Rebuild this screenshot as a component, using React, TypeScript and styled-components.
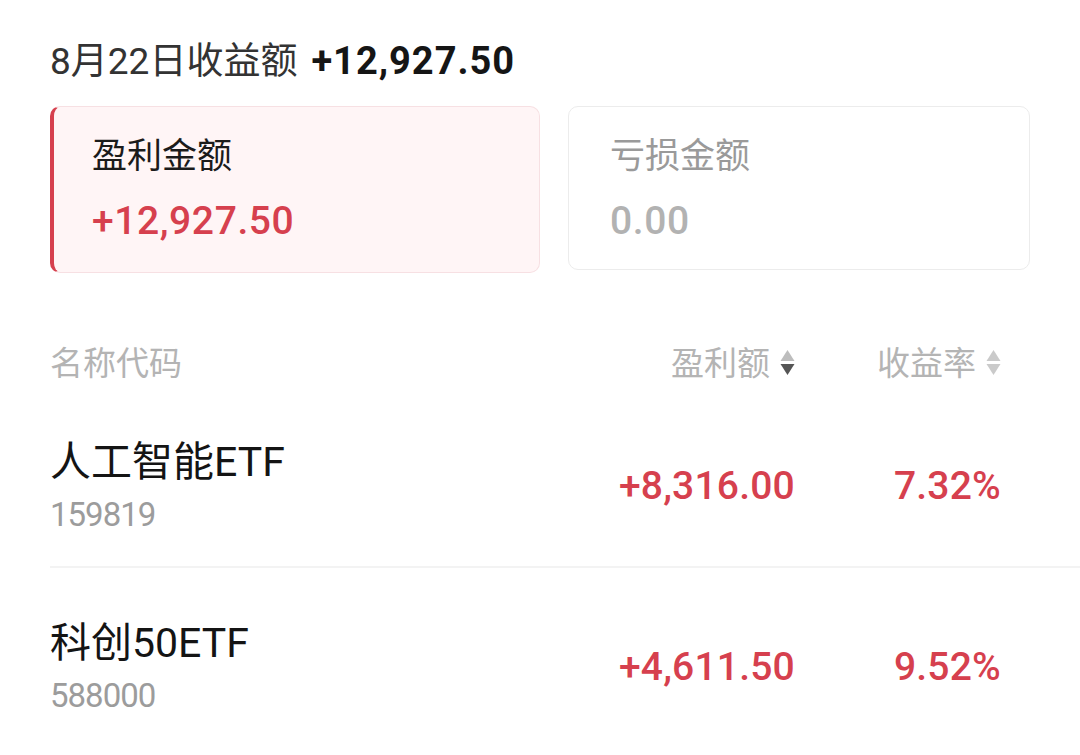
import React from "react";
import styled, { createGlobalStyle } from "styled-components";

const Global = createGlobalStyle`
  html, body { margin: 0; padding: 0; background: #ffffff; }
  body { font-family: Roboto, "Noto Sans CJK SC", sans-serif; -webkit-font-smoothing: antialiased; }
`;

const RED = "#d6404e";

const Page = styled.div`
  width: 1080px;
  height: 755px;
  overflow: hidden;
  padding-left: 50px;
  box-sizing: border-box;
`;

const Title = styled.div`
  margin-top: 39px;
  height: 44px;
  line-height: 44px;
  font-size: 37px;
  color: #333333;
  white-space: nowrap;
`;

const TitleAmount = styled.span`
  font-weight: 700;
  font-size: 38px;
  color: #151515;
  margin-left: 14px;
  letter-spacing: 1px;
`;

const Cards = styled.div`
  display: flex;
  align-items: flex-start;
  gap: 28px;
  margin-top: 23px;
`;

const Card = styled.div<{ $active?: boolean; $w: number; $h: number }>`
  width: ${(p) => p.$w}px;
  height: ${(p) => p.$h}px;
  box-sizing: border-box;
  border-radius: 10px;
  border: 1px solid ${(p) => (p.$active ? "#f7e0e3" : "#ececec")};
  border-left: ${(p) => (p.$active ? `4px solid ${RED}` : "1px solid #ececec")};
  background: ${(p) => (p.$active ? "#fff5f6" : "#ffffff")};
  padding: 28px 0 0 ${(p) => (p.$active ? 38 : 41)}px;
  display: flex;
  flex-direction: column;
  gap: 20px;
`;

const CardLabel = styled.div<{ $muted?: boolean }>`
  font-size: 35px;
  line-height: 44px;
  color: ${(p) => (p.$muted ? "#9a9a9a" : "#1b1b1b")};
`;

const CardValue = styled.div<{ $muted?: boolean }>`
  font-size: 39px;
  line-height: 44px;
  font-weight: 500;
  letter-spacing: 0.6px;
  color: ${(p) => (p.$muted ? "#b2b2b2" : RED)};
`;

const Grid = `
  display: grid;
  grid-template-columns: 1fr 260px 206px;
  padding-right: 79px;
`;

const Header = styled.div`
  ${Grid}
  margin-top: 69px;
  height: 44px;
  line-height: 44px;
  font-size: 33px;
  color: #b4b4b4;
`;

const HeadCell = styled.div<{ $right?: boolean }>`
  display: flex;
  align-items: center;
  justify-content: ${(p) => (p.$right ? "flex-end" : "flex-start")};
  gap: 10px;
`;

const Row = styled.div<{ $last?: boolean }>`
  ${Grid}
  align-items: center;
  padding-top: 51px;
  padding-bottom: 33px;
  border-bottom: ${(p) => (p.$last ? "none" : "2px solid #f3f3f3")};
  margin-top: ${(p) => (p.$last ? 0 : 1)}px;
`;

const NameBlock = styled.div`
  display: flex;
  flex-direction: column;
  gap: 11px;
`;

const Name = styled.div`
  font-size: 41px;
  line-height: 48px;
  color: #141414;
  white-space: nowrap;
`;

const Code = styled.div`
  font-size: 33px;
  line-height: 36px;
  color: #9c9c9c;
  letter-spacing: -1px;
`;

const Num = styled.div`
  text-align: right;
  font-size: 39px;
  line-height: 48px;
  font-weight: 500;
  color: ${RED};
  letter-spacing: 0.2px;
`;

const SortIcon: React.FC<{ active?: boolean }> = ({ active }) => (
  <svg width="15" height="26" viewBox="0 0 15 26" style={{ marginTop: -3 }}>
    <polygon points="7.5,0 14.5,11 0.5,11" fill={active ? "#bdbdbd" : "#cacaca"} />
    <polygon points="0.5,14 14.5,14 7.5,25" fill={active ? "#555555" : "#cacaca"} />
  </svg>
);

const rows = [
  { name: "人工智能ETF", code: "159819", profit: "+8,316.00", rate: "7.32%" },
  { name: "科创50ETF", code: "588000", profit: "+4,611.50", rate: "9.52%" },
];

export default function App() {
  return (
    <>
      <Global />
      <Page>
        <Title>
          8月22日收益额<TitleAmount>+12,927.50</TitleAmount>
        </Title>
        <Cards>
          <Card $active $w={490} $h={167}>
            <CardLabel>盈利金额</CardLabel>
            <CardValue>+12,927.50</CardValue>
          </Card>
          <Card $w={462} $h={164}>
            <CardLabel $muted>亏损金额</CardLabel>
            <CardValue $muted>0.00</CardValue>
          </Card>
        </Cards>
        <Header>
          <HeadCell>名称代码</HeadCell>
          <HeadCell $right>
            盈利额
            <SortIcon active />
          </HeadCell>
          <HeadCell $right>
            收益率
            <SortIcon />
          </HeadCell>
        </Header>
        {rows.map((r, i) => (
          <Row key={r.code} $last={i === rows.length - 1}>
            <NameBlock>
              <Name>{r.name}</Name>
              <Code>{r.code}</Code>
            </NameBlock>
            <Num>{r.profit}</Num>
            <Num>{r.rate}</Num>
          </Row>
        ))}
      </Page>
    </>
  );
}
